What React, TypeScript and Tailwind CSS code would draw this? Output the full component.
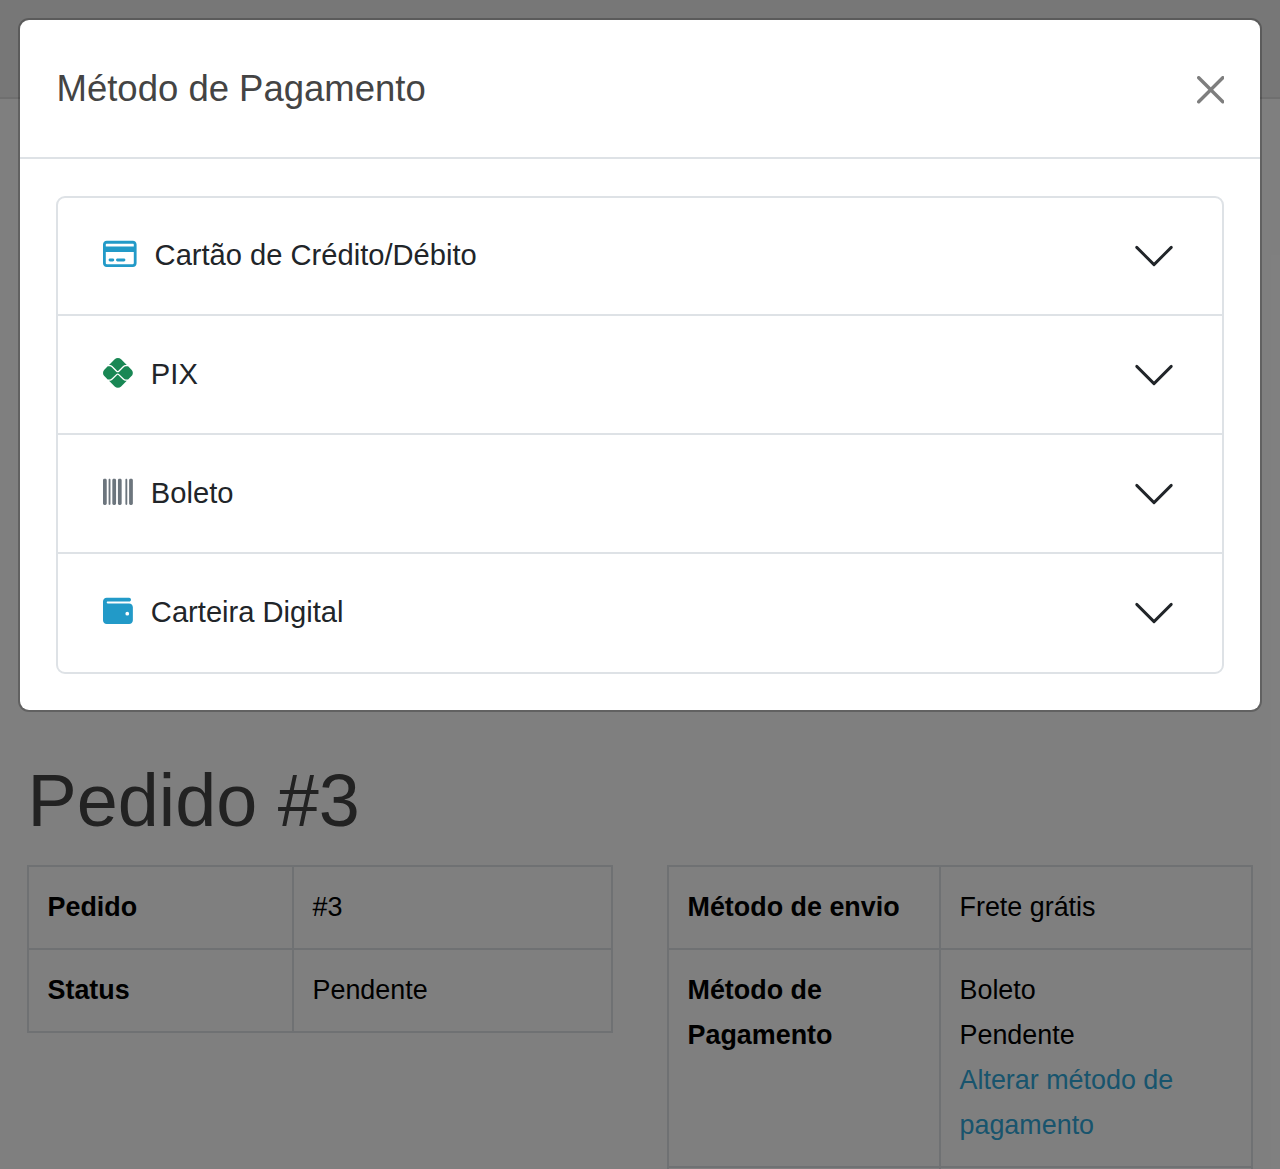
import { FaPix, FaBarcode, FaWallet, FaRegCreditCard } from 'react-icons/fa6';
import type { ReactNode } from 'react';

const methods: { label: string; icon: ReactNode }[] = [
  {
    label: 'Cartão de Crédito/Débito',
    icon: <FaRegCreditCard className="mb-[3.5px] h-[29.87px] w-[33.6px] text-[#229ac8]" />,
  },
  { label: 'PIX', icon: <FaPix className="mb-[3px] size-[29.87px] text-[#198754]" /> },
  { label: 'Boleto', icon: <FaBarcode className="mb-[3px] size-[29.87px] text-[#6c757d]" /> },
  { label: 'Carteira Digital', icon: <FaWallet className="mb-[3.5px] size-[29.87px] text-[#229ac8]" /> },
];

function Chevron() {
  return (
    <svg viewBox="0 0 16 16" className="ml-auto size-[46px]" fill="none" stroke="#212529" strokeLinecap="round" strokeLinejoin="round">
      <path d="m2 5 6 6 6-6" />
    </svg>
  );
}

function Cell({ children, className = '' }: { children: ReactNode; className?: string }) {
  return <td className={`border-2 border-[#dee2e6] py-[18px] pr-[17px] pl-[18.5px] align-top ${className}`}>{children}</td>;
}

function OrderPage() {
  return (
    <div className="flex h-full flex-col bg-white">
      <header className="h-[98.5px] shrink-0 border-b-2 border-[#dfdfdf] bg-[#eeeeee]" />
      <main className="px-[27px] pt-[657px]">
        <h1 className="pl-[0.5px] text-[73.8px] leading-[90px] text-[#444444]">Pedido #3</h1>
        <div className="mt-[19px] flex items-start gap-[54px] text-[26.9px] leading-[45px] text-black">
          <table className="w-[586px] table-fixed border-collapse">
            <tbody>
              <tr>
                <Cell className="w-[265px] font-bold">Pedido</Cell>
                <Cell>#3</Cell>
              </tr>
              <tr>
                <Cell className="font-bold">Status</Cell>
                <Cell>Pendente</Cell>
              </tr>
            </tbody>
          </table>
          <table className="w-[586px] table-fixed border-collapse">
            <tbody>
              <tr>
                <Cell className="w-[272px] font-bold">Método de envio</Cell>
                <Cell>Frete grátis</Cell>
              </tr>
              <tr>
                <Cell className="font-bold">Método de Pagamento</Cell>
                <Cell>
                  Boleto
                  <br />
                  Pendente
                  <br />
                  <a className="text-[#30a8da]">Alterar método de pagamento</a>
                </Cell>
              </tr>
              <tr>
                <Cell>{null}</Cell>
                <Cell>{null}</Cell>
              </tr>
            </tbody>
          </table>
        </div>
      </main>
    </div>
  );
}

function PaymentDialog() {
  return (
    <div role="dialog" className="h-[690px] rounded-[9px] bg-white shadow-[0_0_0_2px_rgba(0,0,0,0.23)]">
      <div className="flex h-[139px] items-center border-b-2 border-[#dee2e6] px-9">
        <h5 className="pt-[1px] pl-[0.5px] text-[36.5px] leading-[56px] text-[#444444]">Método de Pagamento</h5>
        <button aria-label="Fechar" className="mt-[3px] ml-auto opacity-50">
          <svg viewBox="0 0 16 16" className="size-[27.5px]" fill="#000">
            <path d="M.293.293a1 1 0 0 1 1.414 0L8 6.586 14.293.293a1 1 0 1 1 1.414 1.414L9.414 8l6.293 6.293a1 1 0 0 1-1.414 1.414L8 9.414l-6.293 6.293a1 1 0 0 1-1.414-1.414L6.586 8 .293 1.707a1 1 0 0 1 0-1.414z" />
          </svg>
        </button>
      </div>
      <div className="px-9 pt-[37px]">
        <div className="divide-y-2 divide-[#dee2e6] rounded-[9px] border-2 border-[#dee2e6]">
          {methods.map((m) => (
            <div key={m.label} className="flex h-[119px] items-center pr-[45px] pl-[45px] text-[29.13px] text-[#212529] first:h-[118px] last:h-[118px]">
              {m.icon}
              <span className="ml-[18px] pb-[2px] leading-[44px]">{m.label}</span>
              <Chevron />
            </div>
          ))}
        </div>
      </div>
    </div>
  );
}

export default function App() {
  return (
    <div className="relative h-[1169px] w-[1280px] overflow-hidden font-['Liberation_Sans',Arial,sans-serif]">
      <OrderPage />
      <div className="absolute inset-0 bg-black/50 p-5">
        <PaymentDialog />
      </div>
    </div>
  );
}
